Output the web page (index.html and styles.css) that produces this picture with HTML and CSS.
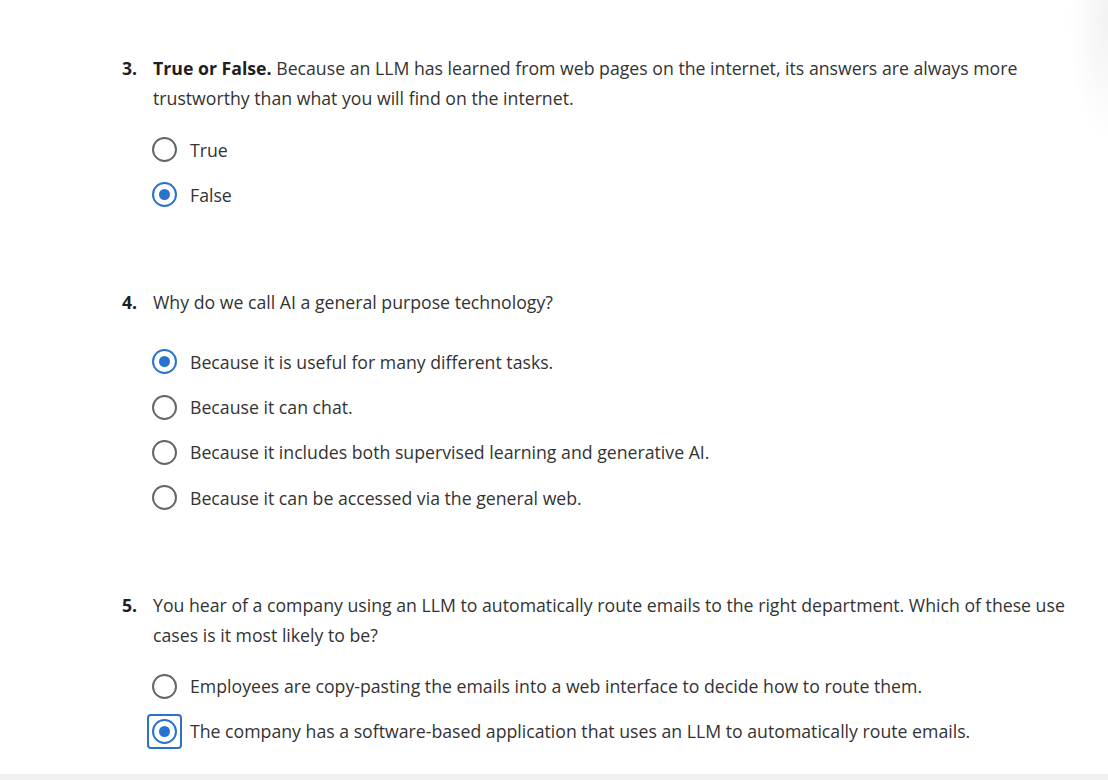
FILE: index.html
```html
<!DOCTYPE html>
<html lang="en">
<head>
<meta charset="utf-8">
<title>Quiz</title>
<link rel="stylesheet" href="styles.css">
</head>
<body>
<div class="page">
  <div class="shade"></div>
  <main class="quiz">
    <section class="question q3">
      <div class="num">3.</div>
      <div class="body">
        <p class="prompt"><strong>True or False.</strong> Because an LLM has learned from web pages on the internet, its answers are always more trustworthy than what you will find on the internet.</p>
        <ul class="options">
          <li class="option"><span class="radio"></span><span class="label">True</span></li>
          <li class="option"><span class="radio checked"></span><span class="label">False</span></li>
        </ul>
      </div>
    </section>
    <section class="question q4">
      <div class="num">4.</div>
      <div class="body">
        <p class="prompt single">Why do we call AI a general purpose technology?</p>
        <ul class="options wide">
          <li class="option"><span class="radio checked"></span><span class="label">Because it is useful for many different tasks.</span></li>
          <li class="option"><span class="radio"></span><span class="label">Because it can chat.</span></li>
          <li class="option"><span class="radio"></span><span class="label">Because it includes both supervised learning and generative AI.</span></li>
          <li class="option"><span class="radio"></span><span class="label">Because it can be accessed via the general web.</span></li>
        </ul>
      </div>
    </section>
    <section class="question q5">
      <div class="num">5.</div>
      <div class="body">
        <p class="prompt">You hear of a company using an LLM to automatically route emails to the right department. Which of these use cases is it most likely to be?</p>
        <ul class="options">
          <li class="option"><span class="radio"></span><span class="label">Employees are copy-pasting the emails into a web interface to decide how to route them.</span></li>
          <li class="option"><span class="radio checked focus"></span><span class="label">The company has a software-based application that uses an LLM to automatically route emails.</span></li>
        </ul>
      </div>
    </section>
  </main>
  <div class="footer-band"></div>
</div>
</body>
</html>
```

FILE: styles.css
```css
*, *::before, *::after { box-sizing: border-box; }
html, body { margin: 0; padding: 0; background: #ffffff; }
body {
  font-family: "Open Sans", Lato, sans-serif;
  color: #333333;
  font-size: 17.7px;
  width: 1108px;
  height: 780px;
  overflow: hidden;
}
.page {
  position: relative;
  width: 1108px;
  height: 780px;
  display: flex;
  flex-direction: column;
}
.shade {
  position: absolute;
  top: 0;
  right: 0;
  width: 70px;
  height: 180px;
  background: radial-gradient(ellipse 40px 120px at 100% 20px, rgba(0,0,0,0.05), rgba(0,0,0,0));
  pointer-events: none;
}
.quiz {
  flex: 1;
  padding: 53px 0 0 122px;
}
.question {
  display: grid;
  grid-template-columns: 31px 935px;
}
.q4 { margin-top: 70px; }
.q5 { margin-top: 69px; }
.num {
  font-weight: 700;
  line-height: 30px;
  color: #1f1f1f;
}
.prompt {
  margin: 0 0 14px 0;
  line-height: 30px;
}
.prompt strong { font-weight: 700; color: #1f1f1f; }
.prompt.single { margin-bottom: 22px; }
.options {
  list-style: none;
  margin: 0;
  padding: 0;
}
.option {
  display: flex;
  align-items: center;
  height: 45px;
  margin-left: -1px;
}
.options.wide .option { height: 45.4px; }
.radio {
  flex: none;
  position: relative;
  width: 25px;
  height: 25px;
  border: 2px solid #666666;
  border-radius: 50%;
  margin-right: 13px;
  display: flex;
  align-items: center;
  justify-content: center;
}
.radio.checked { border-color: #2a73cc; }
.radio.checked::after {
  content: "";
  width: 11px;
  height: 11px;
  border-radius: 50%;
  background: #2a73cc;
}
.radio.focus::before {
  content: "";
  position: absolute;
  left: -7px;
  top: -7px;
  width: 35px;
  height: 35px;
  border: 2px solid #2a73cc;
  border-radius: 4px;
}
.label { line-height: 24px; }
.footer-band {
  height: 6px;
  background: #f0f0f0;
}
```
